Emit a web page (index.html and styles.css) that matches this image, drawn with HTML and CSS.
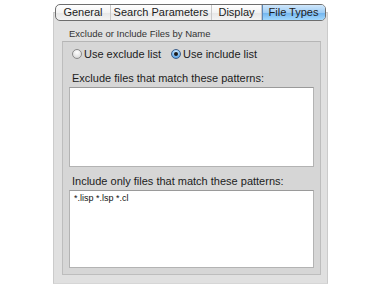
FILE: index.html
```html
<!DOCTYPE html>
<html>
<head>
<meta charset="utf-8">
<link rel="stylesheet" href="styles.css">
</head>
<body>
<div class="wrap">
  <div class="tabs">
    <div class="tab t1">General</div>
    <div class="tab t2">Search Parameters</div>
    <div class="tab t3">Display</div>
    <div class="tab t4 sel">File Types</div>
  </div>
  <div class="panel">
    <div class="caption">Exclude or Include Files by Name</div>
    <div class="group">
      <div class="radios">
        <label class="radio"><span class="dot"></span>Use exclude list</label>
        <label class="radio on"><span class="dot"></span>Use include list</label>
      </div>
      <div class="lbl">Exclude files that match these patterns:</div>
      <div class="box b1"></div>
      <div class="lbl lbl2">Include only files that match these patterns:</div>
      <div class="box b2"><span class="pat">*.lisp *.lsp *.cl</span></div>
    </div>
  </div>
</div>
</body>
</html>
```
FILE: styles.css
```css
html, body { margin: 0; padding: 0; background: #ffffff; }
body { font-family: "Liberation Sans", "DejaVu Sans", sans-serif; color: #1a1a1a; }
.wrap { width: 275px; margin: 4px 0 0 53px; }
.tabs {
  display: flex; height: 15px; margin: 0 2px -9px 2px; position: relative; z-index: 1;
  border: 1px solid #6e6e6e; border-radius: 5px; overflow: hidden;
  background: linear-gradient(#ffffff, #f3f3f3 50%, #e6e6e6 51%, #f4f4f4);
}
.tab {
  font-size: 11px; line-height: 15px; text-align: center; color: #1c1c1c;
  border-right: 1px solid #c9c9c9; box-sizing: border-box;
}
.t1 { width: 55px; }
.t2 { width: 101px; }
.t3 { width: 50px; }
.t4 { flex: 1; border-right: none; }
.sel {
  background: linear-gradient(#cfe7fb, #9fcdf5 50%, #6fb3ee 51%, #a2d8fd);
  box-shadow: inset 1px 0 0 #5c87b8;
}
.panel {
  height: 256px; background: #e0e0e0; border: 1px solid #cbcbcb; border-bottom-color: #d6d6d6;
  padding: 14px 6px 0 8px;
}
.caption { font-size: 9.5px; color: #333; margin: 0 0 0 7px; height: 14px; line-height: 14px; }
.group {
  height: 227px; background: #d6d6d6; border: 1px solid #bdbdbd; border-top-color: #b5b5b5;
  padding: 5px 7px 0 6px; box-sizing: content-box;
}
.radios { display: flex; align-items: center; height: 14px; margin-left: 3px; font-size: 11px; color: #1c1c1c; }
.radio { display: flex; align-items: center; margin-right: 10px; }
.dot {
  width: 10px; height: 10px; border-radius: 50%; box-sizing: border-box;
  border: 1px solid #8a8a8a; margin-right: 2px;
  background: radial-gradient(circle at 50% 30%, #ffffff, #e4e4e4 60%, #c9c9c9);
  position: relative;
}
.on .dot {
  border-color: #3d5f8a;
  background: radial-gradient(circle at 50% 30%, #d9efff, #77b6ee 60%, #4a8ed2);
}
.on .dot::after {
  content: ""; position: absolute; left: 2px; top: 2px; width: 4px; height: 4px;
  border-radius: 50%; background: #1a1a1a;
}
.lbl { font-size: 11px; color: #1c1c1c; margin: 10px 0 0 3px; height: 14px; line-height: 14px; }
.lbl2 { margin-top: 7px; }
.box {
  background: #ffffff; border: 1px solid #b3b3b3; border-top-color: #9a9a9a;
  box-sizing: border-box; width: 245px; margin-top: 2px;
}
.b1 { height: 80px; }
.b2 { height: 78px; padding: 2px 0 0 4px; }
.pat { font-size: 9px; line-height: 10px; display: block; color: #111; }
```
